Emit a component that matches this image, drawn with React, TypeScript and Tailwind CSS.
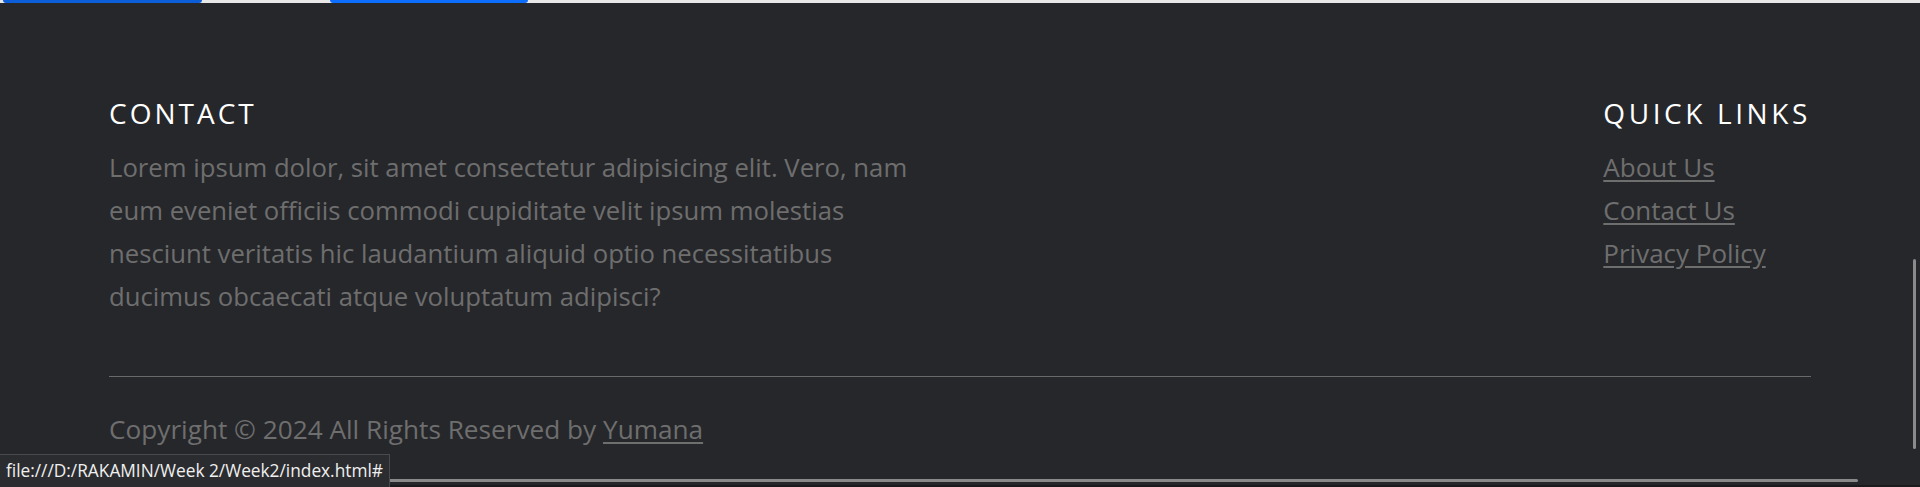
import React from "react";

export default function App() {
  return (
    <div className="relative w-[1920px] h-[487px] overflow-hidden bg-[#26272b] font-['Open_Sans',sans-serif]">
      {/* remnants of the section above */}
      <div className="flex h-[3px] bg-[#e8e8e8]">
        <div className="ml-[3px] w-[199px] rounded-b-[4px] bg-[#0b5ed7]" />
        <div className="ml-[128px] w-[198px] rounded-b-[4px] bg-[#0d6efd]" />
      </div>

      <footer className="pl-[109px] pr-[109px] pt-[94px]">
        <div className="flex justify-between">
          <div>
            <h5 className="text-[28px] leading-[1.2] tracking-[3px] text-white font-normal">CONTACT</h5>
            <p className="mt-[15px] text-[25.7px] leading-[43.2px] text-[#6e6e6e]">
              Lorem ipsum dolor, sit amet consectetur adipisicing elit. Vero, nam
              <br />
              eum eveniet officiis commodi cupiditate velit ipsum molestias
              <br />
              nesciunt veritatis hic laudantium aliquid optio necessitatibus
              <br />
              ducimus obcaecati atque voluptatum adipisci?
            </p>
          </div>
          <div className="ml-[2px]">
            <h5 className="text-[28px] leading-[1.2] tracking-[3.6px] text-white font-normal">QUICK LINKS</h5>
            <ul className="mt-[15px] text-[26px] leading-[43.2px]">
              <li>
                <a href="#" className="text-[#6e6e6e] underline underline-offset-[3px]">About Us</a>
              </li>
              <li>
                <a href="#" className="text-[#6e6e6e] underline underline-offset-[3px]">Contact Us</a>
              </li>
              <li>
                <a href="#" className="text-[#6e6e6e] underline underline-offset-[3px]">Privacy Policy</a>
              </li>
            </ul>
          </div>
        </div>
        <hr className="mt-[58px] border-0 border-t border-[#6a6a6a]" />
        <p className="mt-[31px] text-[26.2px] leading-[43.2px] text-[#6e6e6e]">
          Copyright © 2024 All Rights Reserved by{" "}
          <a href="#" className="text-[#6e6e6e] underline underline-offset-[3px]">Yumana</a>
        </p>
      </footer>

      {/* overlay scrollbars */}
      <div className="absolute left-[1913px] top-[259px] h-[190px] w-[3px] rounded-full bg-[#8a8a8a]" />
      <div className="absolute left-[0px] top-[479px] h-[3px] w-[1858px] rounded-full bg-[#8a8a8a]" />
      <div className="absolute left-0 top-[485px] h-[2px] w-[1920px] bg-[#1b1b1d]" />

      {/* status bubble */}
      <div className="absolute left-0 top-[454px] h-[33px] w-[390px] border-t border-r border-[#4a4a4d] bg-[#2b2c2f] pl-[6px] text-[17.3px] leading-[31px] text-[#f0f0f0] whitespace-nowrap">
        file:///D:/RAKAMIN/Week 2/Week2/index.html#
      </div>
    </div>
  );
}
